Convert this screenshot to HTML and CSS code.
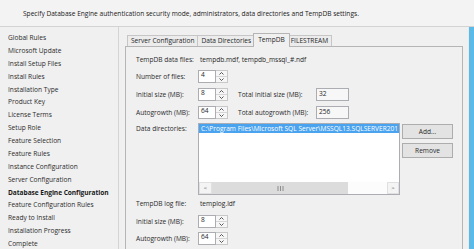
FILE: index.html
```html
<!DOCTYPE html>
<html lang="en">
<head>
<meta charset="utf-8">
<title>Database Engine Configuration</title>
<link rel="stylesheet" href="styles.css">
</head>
<body>
<div class="window">
  <header class="header">Specify Database Engine authentication security mode, administrators, data directories and TempDB settings.</header>
  <div class="main">
    <nav class="nav">
      <ul>
        <li>Global Rules</li>
        <li>Microsoft Update</li>
        <li>Install Setup Files</li>
        <li>Install Rules</li>
        <li>Installation Type</li>
        <li>Product Key</li>
        <li>License Terms</li>
        <li>Setup Role</li>
        <li>Feature Selection</li>
        <li>Feature Rules</li>
        <li>Instance Configuration</li>
        <li>Server Configuration</li>
        <li class="current">Database Engine Configuration</li>
        <li>Feature Configuration Rules</li>
        <li>Ready to Install</li>
        <li>Installation Progress</li>
        <li>Complete</li>
      </ul>
    </nav>
    <section class="content">
      <div class="tabs">
        <div class="tab">Server Configuration</div>
        <div class="tab">Data Directories</div>
        <div class="tab active">TempDB</div>
        <div class="tab">FILESTREAM</div>
      </div>
      <div class="panel">
        <div class="row r-files">
          <span class="label">TempDB data files:</span>
          <span class="value">tempdb.mdf, tempdb_mssql_#.ndf</span>
        </div>
        <div class="row r-count">
          <span class="label">Number of files:</span>
          <div class="spin"><span class="spin-input">4</span><span class="spin-btns"><span class="sb up"><svg width="5" height="3" viewBox="0 0 5 3"><polyline points="0.5,2.5 2.5,0.5 4.5,2.5" fill="none" stroke="#444" stroke-width="0.9"/></svg></span><span class="sb down"><svg width="5" height="3" viewBox="0 0 5 3"><polyline points="0.5,0.5 2.5,2.5 4.5,0.5" fill="none" stroke="#444" stroke-width="0.9"/></svg></span></span></div>
        </div>
        <div class="row r-size">
          <span class="label">Initial size (MB):</span>
          <div class="spin"><span class="spin-input">8</span><span class="spin-btns"><span class="sb up"><svg width="5" height="3" viewBox="0 0 5 3"><polyline points="0.5,2.5 2.5,0.5 4.5,2.5" fill="none" stroke="#444" stroke-width="0.9"/></svg></span><span class="sb down"><svg width="5" height="3" viewBox="0 0 5 3"><polyline points="0.5,0.5 2.5,2.5 4.5,0.5" fill="none" stroke="#444" stroke-width="0.9"/></svg></span></span></div>
          <span class="total-label">Total initial size (MB):</span>
          <span class="field">32</span>
        </div>
        <div class="row r-growth">
          <span class="label">Autogrowth (MB):</span>
          <div class="spin"><span class="spin-input">64</span><span class="spin-btns"><span class="sb up"><svg width="5" height="3" viewBox="0 0 5 3"><polyline points="0.5,2.5 2.5,0.5 4.5,2.5" fill="none" stroke="#444" stroke-width="0.9"/></svg></span><span class="sb down"><svg width="5" height="3" viewBox="0 0 5 3"><polyline points="0.5,0.5 2.5,2.5 4.5,0.5" fill="none" stroke="#444" stroke-width="0.9"/></svg></span></span></div>
          <span class="total-label">Total autogrowth (MB):</span>
          <span class="field">256</span>
        </div>
        <div class="row r-dirs">
          <span class="label">Data directories:</span>
          <div class="listbox">
            <div class="items">
              <div class="item selected">C:\Program Files\Microsoft SQL Server\MSSQL13.SQLSERVER201</div>
            </div>
            <div class="hscroll">
              <span class="sc-btn">&lt;</span>
              <span class="thumb"><svg width="7" height="5" viewBox="0 0 7 5"><path d="M1 0V5M3.5 0V5M6 0V5" stroke="#777" stroke-width="0.8"/></svg></span>
              <span class="track"></span>
              <span class="sc-btn">&gt;</span>
            </div>
          </div>
          <div class="buttons">
            <span class="button">Add...</span>
            <span class="button">Remove</span>
          </div>
        </div>
        <div class="row r-log">
          <span class="label">TempDB log file:</span>
          <span class="value">templog.ldf</span>
        </div>
        <div class="row r-logsize">
          <span class="label">Initial size (MB):</span>
          <div class="spin"><span class="spin-input">8</span><span class="spin-btns"><span class="sb up"><svg width="5" height="3" viewBox="0 0 5 3"><polyline points="0.5,2.5 2.5,0.5 4.5,2.5" fill="none" stroke="#444" stroke-width="0.9"/></svg></span><span class="sb down"><svg width="5" height="3" viewBox="0 0 5 3"><polyline points="0.5,0.5 2.5,2.5 4.5,0.5" fill="none" stroke="#444" stroke-width="0.9"/></svg></span></span></div>
        </div>
        <div class="row r-loggrowth">
          <span class="label">Autogrowth (MB):</span>
          <div class="spin"><span class="spin-input">64</span><span class="spin-btns"><span class="sb up"><svg width="5" height="3" viewBox="0 0 5 3"><polyline points="0.5,2.5 2.5,0.5 4.5,2.5" fill="none" stroke="#444" stroke-width="0.9"/></svg></span><span class="sb down"><svg width="5" height="3" viewBox="0 0 5 3"><polyline points="0.5,0.5 2.5,2.5 4.5,0.5" fill="none" stroke="#444" stroke-width="0.9"/></svg></span></span></div>
        </div>
      </div>
    </section>
    <div class="edge"></div>
  </div>
</div>
</body>
</html>
```
FILE: styles.css
```css
* { box-sizing: border-box; }
html, body { margin: 0; padding: 0; }
body {
  width: 474px;
  height: 249px;
  overflow: hidden;
  background: #f0f0f0;
  font-family: "Open Sans", "Noto Sans", sans-serif;
  font-size: 6.6px;
  color: #262626;
}
.window { width: 474px; height: 249px; display: flex; flex-direction: column; }
.header {
  height: 27px;
  flex: none;
  background: #f3f3f3;
  border-bottom: 1px solid #d3d3d3;
  padding-left: 23px;
  line-height: 27px;
  font-size: 6.6px;
  color: #1a1a1a;
  white-space: nowrap;
}
.main { flex: 1; display: flex; min-height: 0; }
.nav {
  width: 119px;
  flex: none;
  border-right: 1px solid #d4d4d4;
  padding-top: 5px;
}
.nav ul { list-style: none; margin: 0; padding: 0 0 0 8px; }
.nav li { height: 12.875px; line-height: 12.875px; white-space: nowrap; color: #2b2b2b; }
.nav li.current { font-weight: bold; color: #1a1a1a; letter-spacing: -0.05px; }
.content {
  flex: 1;
  padding: 6px 5px 0 6px;
  display: flex;
  flex-direction: column;
  min-width: 0;
}
.tabs { display: flex; align-items: flex-end; height: 13px; margin-left: 2px; }
.tab {
  height: 11px;
  line-height: 10px;
  padding: 0 3px;
  border: 1px solid #c6c6c6;
  border-bottom: none;
  background: #ececec;
  white-space: nowrap;
  margin-left: -1px;
}
.tab:first-child { margin-left: 0; }
.tab.active {
  height: 14px;
  line-height: 12px;
  margin: 0 -2px -1px -2px;
  padding: 0 4px;
  background: #f0f0f0;
  border-color: #b5b5b5;
  position: relative;
  z-index: 1;
}
.panel {
  flex: 1;
  border: 1px solid #b5b5b5;
  border-bottom: none;
  padding: 6px 0 0 10px;
  display: flex;
  flex-direction: column;
}
.row { display: flex; align-items: center; height: 13px; flex: none; }
.label { width: 62px; flex: none; white-space: nowrap; color: #2b2b2b; }
.value { padding-left: 2px; white-space: nowrap; }
.r-count { margin-top: 4px; }
.r-size { margin-top: 5px; }
.r-growth { margin-top: 5px; }
.r-dirs { margin-top: 4px; height: 72px; align-items: flex-start; }
.r-dirs .label { line-height: 11px; }
.r-log { margin-top: 2px; }
.r-logsize { margin-top: 5px; }
.r-loggrowth { margin-top: 4px; }
.spin { display: flex; width: 30px; height: 13px; flex: none; }
.spin-input {
  width: 18px;
  background: #fff;
  border: 1px solid #abadb3;
  padding-left: 2px;
  line-height: 8px;
}
.spin-btns {
  width: 12px;
  display: flex;
  flex-direction: column;
  border: 1px solid #c8c8c8;
  border-left: none;
  background: #f6f6f6;
}
.sb { flex: 1; display: flex; align-items: center; justify-content: center; }
.sb.up { border-bottom: 1px solid #d6d6d6; }
.sb svg { display: block; }
.total-label { margin-left: 10px; width: 78px; white-space: nowrap; flex: none; color: #2b2b2b; }
.field {
  width: 33px;
  height: 13px;
  background: #f7f7f7;
  border: 1px solid #abadb3;
  padding-left: 2px;
  line-height: 10px;
}
.listbox {
  width: 202px;
  height: 72px;
  flex: none;
  background: #fff;
  border: 1px solid #abadb3;
  display: flex;
  flex-direction: column;
}
.items { flex: 1; overflow: hidden; }
.item { height: 9px; line-height: 9px; padding-left: 2px; white-space: nowrap; overflow: hidden; }
.item.selected { background: #4aa3ef; color: #fff; }
.hscroll { height: 12px; display: flex; flex: none; }
.sc-btn {
  width: 13px;
  background: #f4f4f4;
  border: 1px solid #e0e0e0;
  display: flex;
  align-items: center;
  justify-content: center;
  font-size: 6px;
  color: #555;
}
.sc-btn:last-child { width: 12px; }
.thumb {
  width: 136px;
  background: #dcdcdc;
  display: flex;
  align-items: center;
  justify-content: center;
}
.thumb svg { display: block; }
.track { flex: 1; background: #fcfcfc; }
.buttons { display: flex; flex-direction: column; gap: 4px; margin-left: 2px; margin-top: 1px; }
.button {
  width: 51px;
  height: 15px;
  background: #e3e3e3;
  border: 1px solid #adadad;
  text-align: center;
  line-height: 13px;
  color: #2b2b2b;
}
.edge {
  width: 6px;
  flex: none;
  background: #5bbbe8;
  border-left: 1px solid #e9e9e9;
}
```
